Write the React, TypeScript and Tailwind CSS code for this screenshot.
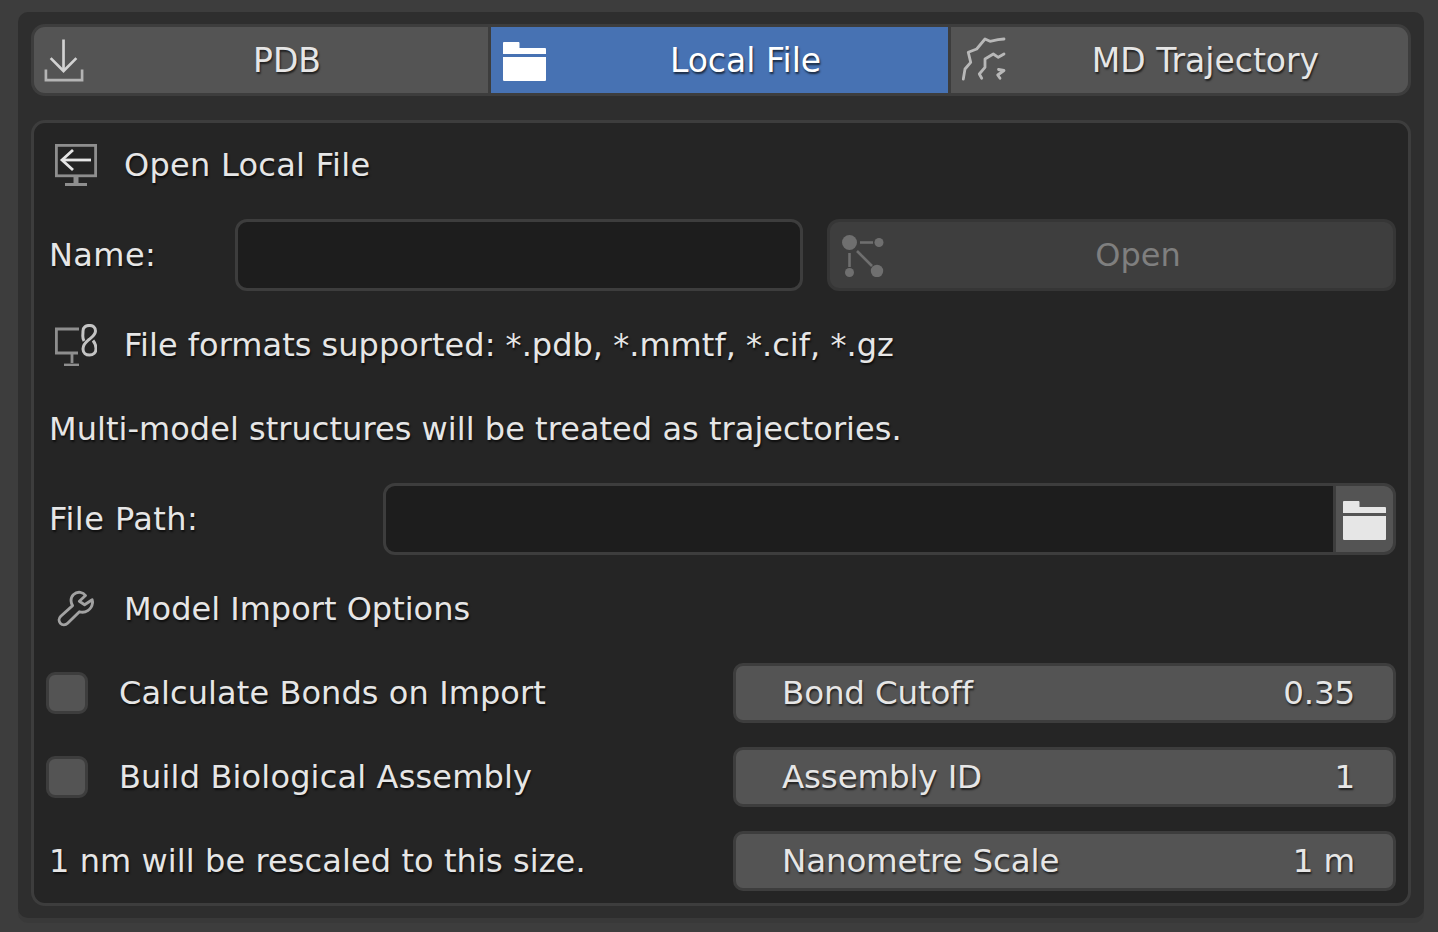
import { ReactNode } from 'react';

const shadow = '[text-shadow:1px_2px_2px_rgba(0,0,0,0.65)]';

function DownloadIcon() {
  return (
    <svg width="40" height="44" viewBox="0 0 42 46" fill="none" stroke="#d2d2d2" strokeWidth="2.8" className="shrink-0 -ml-0.5 mt-0.5">
      <path d="M20.5 0.5V33" />
      <path d="M7 20L20.5 33.5L34 20" />
      <path d="M2 32V43H40V32" stroke="#b4b4b4" />
    </svg>
  );
}

function FolderIcon({ color }: { color: string }) {
  return (
    <svg width="43" height="39" viewBox="0 0 43 39" fill={color} className="shrink-0 mt-0.5">
      <path d="M1 0H15.5C16 0 16.5 0.5 16.5 1V6H42C42.5 6 43 6.5 43 7V12H0V1C0 0.5 0.5 0 1 0Z" />
      <path d="M0 15H43V37.5C43 38.5 42.5 39 41.5 39H1.5C0.5 39 0 38.5 0 37.5Z" />
    </svg>
  );
}

function TrajectoryIcon() {
  return (
    <svg width="46" height="46" viewBox="0 0 46 46" fill="none" stroke="#b8b8b8" strokeWidth="2.8" strokeLinejoin="round" strokeLinecap="round" className="shrink-0 -ml-px">
      <path d="M1.3 42L3 32L8.7 25.3L6.3 15.3L14.7 12L23 2L28 4.3L36 2.7L42 2" />
      <path d="M19.7 41.3L17.3 37L23 30.3L23 22L31.3 17L36.3 20.3L42 17" />
      <path d="M38 41.3L35.7 38L42 33.5L36.5 32.5" />
    </svg>
  );
}

function MonitorBackIcon() {
  return (
    <svg width="42" height="42" viewBox="0 0 42 42" fill="none" stroke="#8e8e8e" strokeWidth="2.8" className="shrink-0">
      <rect x="1.4" y="1.4" width="39.2" height="30.4" />
      <path d="M21 32V39" strokeWidth="5" />
      <path d="M10 40.5H32" strokeWidth="3" />
      <path d="M36 16H7" stroke="#e6e6e6" />
      <path d="M18 6L7 16L18 26" stroke="#e6e6e6" />
    </svg>
  );
}

function MonitorLinkIcon() {
  return (
    <svg width="42" height="42" viewBox="0 0 42 42" fill="none" stroke="#8e8e8e" strokeWidth="2.8" className="shrink-0">
      <path d="M24 5H1.4V29H23" />
      <path d="M17 29V39" />
      <path d="M9 41H24" strokeWidth="2.8" />
      <path d="M29 17C27 14 28 12 28 7C28 3 31 1.4 34.5 1.4C38 1.4 40.5 3.5 40.5 7C40.5 11 37 13 34 15.5C31 18 28 20 28 25C28 29 31 31 34.5 31C38 31 41 29 41 24.5C41 21 40 19 38 16.5" stroke="#c4c4c4" strokeWidth="3" />
    </svg>
  );
}

function NodesIcon() {
  return (
    <svg width="42" height="43" viewBox="0 0 42 43" fill="#6f6f6f" stroke="#6f6f6f" className="shrink-0">
      <circle cx="7.5" cy="8.5" r="7.5" stroke="none" />
      <circle cx="37" cy="8.5" r="4.5" stroke="none" />
      <circle cx="7.5" cy="38.5" r="4.5" stroke="none" />
      <circle cx="35" cy="37" r="6.2" stroke="none" />
      <path d="M18 8.5H31" strokeWidth="2.6" />
      <path d="M7.5 19V33" strokeWidth="2.6" />
      <path d="M15 17L30 32" strokeWidth="2.6" />
    </svg>
  );
}

// Outlined wrench: jaws at the top right, handle running down to the left
function WrenchIcon() {
  return (
    <svg width="40" height="40" viewBox="0 0 42 42" fill="none" stroke="#a2a2a2" strokeWidth="3" strokeLinejoin="round" className="shrink-0 ml-px mt-0.5">
      <path d="M25.5 2.5C20 1.8 15.5 6 15.8 11.5C15.9 13.5 16.5 15 17.4 16.4L5 27.5C2.6 29.8 2.8 33 4.6 35C6.6 37.2 10 37.2 12.2 35L24.6 22.8C30.5 25 37.5 20.5 38.3 13.8C38.5 12.5 38.3 11.4 38 10.3L30 15.5L24.5 11.8L31 5.8C29.5 3.8 27.5 2.8 25.5 2.5Z" />
    </svg>
  );
}

function Tab({ icon, label, active }: { icon: ReactNode; label: string; active?: boolean }) {
  return (
    <div className={`flex items-center h-full text-[33px] ${active ? 'bg-[#4772b3] text-white' : 'bg-[#545454] text-[#e6e6e6]'}`}>
      <div className="w-[52px] shrink-0 pl-3 flex items-center">{icon}</div>
      <div className={`flex-1 text-center ${shadow}`}>{label}</div>
    </div>
  );
}

function Row({ children }: { children: ReactNode }) {
  return <div className="flex items-center h-[60px]">{children}</div>;
}

function IconLabel({ icon, label, tracking = '' }: { icon: ReactNode; label: string; tracking?: string }) {
  return (
    <Row>
      <div className="w-[78px] pl-[9px] shrink-0 flex items-center">{icon}</div>
      <span className={`${tracking} ${shadow}`}>{label}</span>
    </Row>
  );
}

function NumberField({ label, value }: { label: string; value: string }) {
  return (
    <div className="w-[663px] h-[60px] shrink-0 flex items-center justify-between pl-[46px] pr-[38px] bg-[#545454] border-[3px] border-[#3d3d3d] rounded-[10px] text-[32.5px] text-[#e6e6e6] tracking-[-0.15px]">
      <span className={shadow}>{label}</span>
      <span className={shadow}>{value}</span>
    </div>
  );
}

function OptionRow({ label, field, checkbox = true, tracking = '' }: { label: string; field: ReactNode; checkbox?: boolean; tracking?: string }) {
  return (
    <Row>
      <div className="flex-1 flex items-center min-w-0">
        {checkbox && <div className="w-[42px] h-[42px] shrink-0 mr-[31px] bg-[#545454] border-[3px] border-[#3d3d3d] rounded-[9px]" />}
        <span className={`${checkbox ? '' : 'pl-[3px]'} ${tracking} ${shadow}`}>{label}</span>
      </div>
      {field}
    </Row>
  );
}

export default function App() {
  return (
    <div className="w-[1438px] h-[932px] overflow-hidden bg-[#3d3d3d] pt-3 pl-[18px] font-['DejaVu_Sans',sans-serif] text-[32px] leading-none text-[#e6e6e6]">
      <div className="w-[1406px] h-[906px] pt-3 pl-[13px] bg-[#2e2e2e] rounded-[10px] shadow-[0_5px_0_#393939]">
        {/* Tabs */}
        <div className="w-[1380px] h-[72px] border-[3px] border-[#3d3d3d] rounded-[14px] overflow-hidden bg-[#3d3d3d] grid grid-cols-[454px_457px_457px] gap-x-[3px]">
          <Tab icon={<DownloadIcon />} label="PDB" />
          <Tab icon={<FolderIcon color="#ffffff" />} label="Local File" active />
          <Tab icon={<TrajectoryIcon />} label="MD Trajectory" />
        </div>

        {/* Panel */}
        <div className="w-[1380px] h-[786px] mt-6 pt-3 px-3 border-[3px] border-[#3d3d3d] rounded-[14px] bg-[#252525] flex flex-col gap-6">
          <IconLabel icon={<MonitorBackIcon />} label="Open Local File" tracking="tracking-[0.27px]" />

          <div className="flex items-center h-[72px] gap-6">
            <span className={`w-[189px] shrink-0 pl-[3px] tracking-[0.4px] ${shadow}`}>Name:</span>
            <div className="w-[568px] h-full shrink-0 bg-[#1d1d1d] border-[3px] border-[#3d3d3d] rounded-[12px] -ml-6" />
            <div className="flex-1 h-full flex items-center bg-[#3e3e3e] border-[3px] border-[#363636] rounded-[12px] text-[#7f7f7f]">
              <div className="w-[53px] shrink-0 pl-3 flex items-center">
                <NodesIcon />
              </div>
              <span className="flex-1 text-center">Open</span>
            </div>
          </div>

          <IconLabel icon={<MonitorLinkIcon />} label="File formats supported: *.pdb, *.mmtf, *.cif, *.gz" tracking="tracking-[0.02px]" />

          <Row>
            <span className={`pl-[3px] tracking-[0.04px] ${shadow}`}>Multi-model structures will be treated as trajectories.</span>
          </Row>

          <div className="flex items-center h-[72px]">
            <span className={`w-[337px] shrink-0 pl-[3px] tracking-[0.45px] ${shadow}`}>File Path:</span>
            <div className="flex-1 h-full flex border-[3px] border-[#3d3d3d] rounded-[12px] overflow-hidden bg-[#3d3d3d]">
              <div className="flex-1 bg-[#1d1d1d]" />
              <div className="w-[57px] ml-[3px] flex items-center justify-center bg-[#545454]">
                <FolderIcon color="#e6e6e6" />
              </div>
            </div>
          </div>

          <IconLabel icon={<WrenchIcon />} label="Model Import Options" />

          <OptionRow label="Calculate Bonds on Import" tracking="tracking-[0.08px]" field={<NumberField label="Bond Cutoff" value="0.35" />} />
          <OptionRow label="Build Biological Assembly" tracking="tracking-[0.16px]" field={<NumberField label="Assembly ID" value="1" />} />
          <OptionRow label="1 nm will be rescaled to this size." tracking="tracking-[0.09px]" checkbox={false} field={<NumberField label="Nanometre Scale" value="1 m" />} />
        </div>
      </div>
    </div>
  );
}
